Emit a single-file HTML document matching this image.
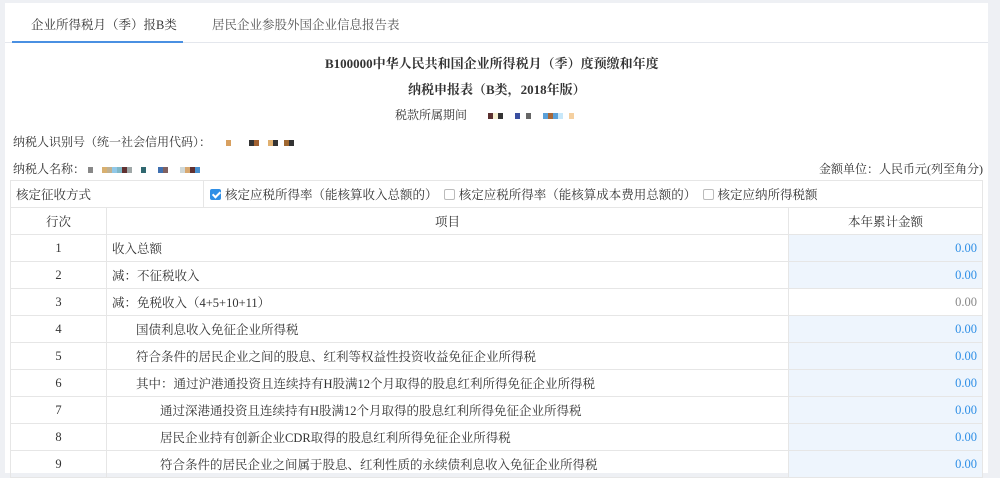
<!DOCTYPE html>
<html><head><meta charset="utf-8"><style>
*{margin:0;padding:0;box-sizing:border-box}
body{width:1000px;height:468px;overflow:hidden;background:#eef0f4;font-family:"Liberation Serif","Noto Serif CJK SC",serif;color:#333;font-size:12px}
.panel{position:absolute;left:5px;top:3px;width:983px;height:470px;background:#fff}
.tabs{position:absolute;left:0;top:0;width:983px;height:40px;border-bottom:1px solid #e4e7ed}
.tab{position:absolute;top:12px;font-size:12.5px}
.ul{position:absolute;left:7px;top:38px;width:171px;height:2px;background:#4a90e2}
.t{position:absolute;white-space:nowrap}
.sq{display:inline-block;width:5px;height:6px;vertical-align:middle}
table{position:absolute;left:5px;top:177px;border-collapse:collapse;width:972px;table-layout:fixed}
td{border:1px solid #e6e6e6;height:27px;font-size:12.5px;padding:0 5px;white-space:nowrap;overflow:hidden}
.c{text-align:center}
.n{text-align:right;color:#2f8fe6;background:#eef5fd}
.g{color:#888;text-align:right}
.cb{display:inline-block;width:11px;height:11px;border:1px solid #bbb;border-radius:2px;vertical-align:-1px;margin-right:4px;background:#fff}
.cb.on{background:#2f8fe6;border-color:#2f8fe6;position:relative}
.cb.on:after{content:"";position:absolute;left:3px;top:0px;width:3px;height:6px;border:solid #fff;border-width:0 2px 2px 0;transform:rotate(45deg)}
</style></head><body>
<div class="panel">
<div class="tabs">
<div class="tab" style="left:26px;">企业所得税月（季）报B类</div>
<div class="tab" style="left:207px;color:#555">居民企业参股外国企业信息报告表</div>
<div class="ul"></div>
</div>
<div class="t" style="left:320px;top:50px;font-size:13px;font-weight:bold">B100000中华人民共和国企业所得税月（季）度预缴和年度</div>
<div class="t" style="left:403px;top:76px;font-size:13px;font-weight:bold">纳税申报表（B类，2018年版）</div>
<div class="t" style="left:390px;top:103px;">税款所属期间 &nbsp;&nbsp;&nbsp;&nbsp;&nbsp;&nbsp;<span class="sq" style="background:#5a3030"></span><span class="sq" style="background:#f5efd0"></span><span class="sq" style="background:#333"></span>&nbsp;&nbsp;&nbsp;&nbsp;<span class="sq" style="background:#3a4fa0"></span>&nbsp;&nbsp;<span class="sq" style="background:#666"></span>&nbsp;&nbsp;&nbsp;&nbsp;<span class="sq" style="background:#5aa0d8"></span><span class="sq" style="background:#a86838"></span><span class="sq" style="background:#5aa0d8"></span><span class="sq" style="background:#c8e8fa"></span>&nbsp;&nbsp;<span class="sq" style="background:#f5d0a0"></span></div>
<div class="t" style="left:8px;top:130px;">纳税人识别号（统一社会信用代码）： &nbsp;&nbsp;&nbsp;&nbsp;<span class="sq" style="background:#d8a060"></span>&nbsp;&nbsp;&nbsp;&nbsp;&nbsp;&nbsp;<span class="sq" style="background:#333"></span><span class="sq" style="background:#a06030"></span>&nbsp;&nbsp;&nbsp;<span class="sq" style="background:#e0b070"></span><span class="sq" style="background:#333"></span>&nbsp;&nbsp;<span class="sq" style="background:#a06830"></span><span class="sq" style="background:#333"></span></div>
<div class="t" style="left:8px;top:157px;">纳税人名称： <span class="sq" style="background:#888"></span>&nbsp;&nbsp;&nbsp;<span class="sq" style="background:#d8b070"></span><span class="sq" style="background:#c0b090"></span><span class="sq" style="background:#90c8e8"></span><span class="sq" style="background:#80b8c8"></span><span class="sq" style="background:#603030"></span><span class="sq" style="background:#a0a8a8"></span>&nbsp;&nbsp;&nbsp;<span class="sq" style="background:#306870"></span>&nbsp;&nbsp;&nbsp;&nbsp;<span class="sq" style="background:#4070b0"></span><span class="sq" style="background:#806060"></span>&nbsp;&nbsp;&nbsp;&nbsp;<span class="sq" style="background:#d0d8d8"></span><span class="sq" style="background:#d8a870"></span><span class="sq" style="background:#603030"></span><span class="sq" style="background:#4890d0"></span></div>
<div class="t" style="left:814px;top:157px;">金额单位：人民币元(列至角分)</div>
<table>
<colgroup><col style="width:96px"><col style="width:97px"><col style="width:585px"><col style="width:194px"></colgroup>
<tr><td colspan="2">核定征收方式</td><td colspan="2" style="padding-left:6px"><span class="cb on"></span>核定应税所得率（能核算收入总额的） &nbsp;<span class="cb"></span>核定应税所得率（能核算成本费用总额的） &nbsp;<span class="cb"></span>核定应纳所得税额</td></tr>
<tr><td class="c">行次</td><td class="c" colspan="2">项目</td><td class="c">本年累计金额</td></tr>
<tr><td class="c">1</td><td colspan="2">收入总额</td><td class="n">0.00</td></tr>
<tr><td class="c">2</td><td colspan="2">减：不征税收入</td><td class="n">0.00</td></tr>
<tr><td class="c">3</td><td colspan="2">减：免税收入（4+5+10+11）</td><td class="g">0.00</td></tr>
<tr><td class="c">4</td><td colspan="2" style="padding-left:29px">国债利息收入免征企业所得税</td><td class="n">0.00</td></tr>
<tr><td class="c">5</td><td colspan="2" style="padding-left:29px">符合条件的居民企业之间的股息、红利等权益性投资收益免征企业所得税</td><td class="n">0.00</td></tr>
<tr><td class="c">6</td><td colspan="2" style="padding-left:29px">其中：通过沪港通投资且连续持有H股满12个月取得的股息红利所得免征企业所得税</td><td class="n">0.00</td></tr>
<tr><td class="c">7</td><td colspan="2" style="padding-left:53px">通过深港通投资且连续持有H股满12个月取得的股息红利所得免征企业所得税</td><td class="n">0.00</td></tr>
<tr><td class="c">8</td><td colspan="2" style="padding-left:53px">居民企业持有创新企业CDR取得的股息红利所得免征企业所得税</td><td class="n">0.00</td></tr>
<tr><td class="c">9</td><td colspan="2" style="padding-left:53px">符合条件的居民企业之间属于股息、红利性质的永续债利息收入免征企业所得税</td><td class="n">0.00</td></tr>
</table>
</div>
</body></html>
